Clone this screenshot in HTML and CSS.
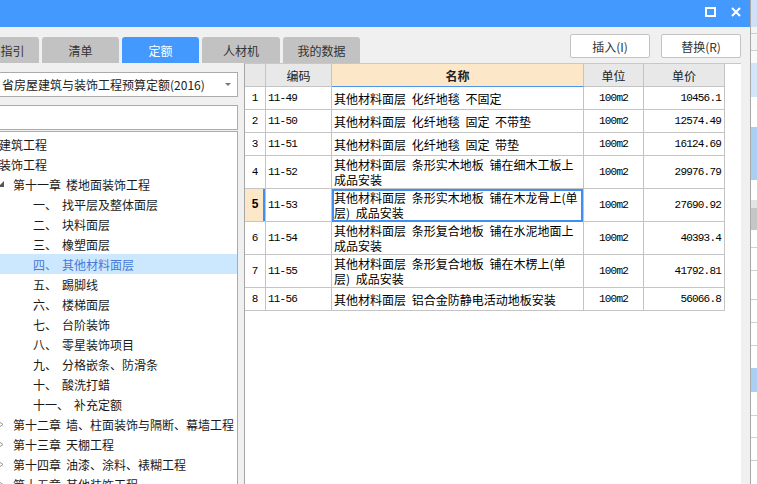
FILE: index.html
```html
<!DOCTYPE html>
<html lang="zh-CN">
<head>
<meta charset="utf-8">
<title>定额查询</title>
<link rel="stylesheet" href="styles.css">
</head>
<body>
<div class="screen">
  <div class="dialog">
    <div class="titlebar">
      <svg class="ico" width="11" height="10" viewBox="0 0 11 10"><rect x="1" y="1" width="9" height="8" fill="none" stroke="#fff" stroke-width="2"/></svg>
      <svg class="ico" width="10" height="10" viewBox="0 0 10 10"><path d="M1 1L9 9M9 1L1 9" stroke="#fff" stroke-width="2"/></svg>
    </div>
    <div class="toolbar">
      <div class="tabs">
        <div class="tab">清单指引</div>
        <div class="tab">清单</div>
        <div class="tab active">定额</div>
        <div class="tab wide">人材机</div>
        <div class="tab">我的数据</div>
      </div>
      <div class="actions">
        <button class="btn">插入(I)</button>
        <button class="btn">替换(R)</button>
      </div>
    </div>
    <div class="content">
      <div class="left">
        <div class="combo"><span class="combo-text">省房屋建筑与装饰工程预算定额(2016)</span><span class="caret"></span></div>
        <div class="search"></div>
        <div class="tree">
          <div class="node top">建筑工程</div>
          <div class="node top">装饰工程</div>
          <div class="node chapter"><span class="tw"><svg width="6" height="6" viewBox="0 0 6 6"><polygon points="6,0 6,6 0,6" fill="#555"/></svg></span><span>第十一章</span><span class="label">楼地面装饰工程</span></div>
          <div class="node sub"><span>一、</span><span class="label">找平层及整体面层</span></div>
          <div class="node sub"><span>二、</span><span class="label">块料面层</span></div>
          <div class="node sub"><span>三、</span><span class="label">橡塑面层</span></div>
          <div class="node sub sel"><span>四、</span><span class="label">其他材料面层</span></div>
          <div class="node sub"><span>五、</span><span class="label">踢脚线</span></div>
          <div class="node sub"><span>六、</span><span class="label">楼梯面层</span></div>
          <div class="node sub"><span>七、</span><span class="label">台阶装饰</span></div>
          <div class="node sub"><span>八、</span><span class="label">零星装饰项目</span></div>
          <div class="node sub"><span>九、</span><span class="label">分格嵌条、防滑条</span></div>
          <div class="node sub"><span>十、</span><span class="label">酸洗打蜡</span></div>
          <div class="node sub"><span>十一、</span><span class="label">补充定额</span></div>
          <div class="node chapter"><span class="tw"><svg width="6" height="7" viewBox="0 0 6 7"><polygon points="0,0 5,3.5 0,7" fill="none" stroke="#999" stroke-width="1"/></svg></span><span>第十二章</span><span class="label">墙、柱面装饰与隔断、幕墙工程</span></div>
          <div class="node chapter"><span class="tw"><svg width="6" height="7" viewBox="0 0 6 7"><polygon points="0,0 5,3.5 0,7" fill="none" stroke="#999" stroke-width="1"/></svg></span><span>第十三章</span><span class="label">天棚工程</span></div>
          <div class="node chapter"><span class="tw"><svg width="6" height="7" viewBox="0 0 6 7"><polygon points="0,0 5,3.5 0,7" fill="none" stroke="#999" stroke-width="1"/></svg></span><span>第十四章</span><span class="label">油漆、涂料、裱糊工程</span></div>
          <div class="node chapter"><span class="tw"><svg width="6" height="7" viewBox="0 0 6 7"><polygon points="0,0 5,3.5 0,7" fill="none" stroke="#999" stroke-width="1"/></svg></span><span>第十五章</span><span class="label">其他装饰工程</span></div>
        </div>
      </div>
      <div class="right">
        <div class="grid">
          <div class="c h"></div><div class="c h">编码</div><div class="c h name-h">名称</div><div class="c h">单位</div><div class="c h">单价</div>

          <div class="c rn">1</div><div class="c code">11-49</div><div class="c name">其他材料面层 化纤地毯 不固定</div><div class="c unit">100m2</div><div class="c price">10456.1</div>
          <div class="c rn">2</div><div class="c code">11-50</div><div class="c name">其他材料面层 化纤地毯 固定 不带垫</div><div class="c unit">100m2</div><div class="c price">12574.49</div>
          <div class="c rn">3</div><div class="c code">11-51</div><div class="c name">其他材料面层 化纤地毯 固定 带垫</div><div class="c unit">100m2</div><div class="c price">16124.69</div>
          <div class="c rn">4</div><div class="c code">11-52</div><div class="c name">其他材料面层 条形实木地板 铺在细木工板上<br>成品安装</div><div class="c unit">100m2</div><div class="c price">29976.79</div>
          <div class="c rn cur">5</div><div class="c code">11-53</div><div class="c name sel">其他材料面层 条形实木地板 铺在木龙骨上(单<br>层) 成品安装</div><div class="c unit">100m2</div><div class="c price">27690.92</div>
          <div class="c rn">6</div><div class="c code">11-54</div><div class="c name">其他材料面层 条形复合地板 铺在水泥地面上<br>成品安装</div><div class="c unit">100m2</div><div class="c price">40393.4</div>
          <div class="c rn">7</div><div class="c code">11-55</div><div class="c name">其他材料面层 条形复合地板 铺在木楞上(单<br>层) 成品安装</div><div class="c unit">100m2</div><div class="c price">41792.81</div>
          <div class="c rn">8</div><div class="c code">11-56</div><div class="c name">其他材料面层 铝合金防静电活动地板安装</div><div class="c unit">100m2</div><div class="c price">56066.8</div>
        </div>
      </div>
    </div>
  </div>
  <div class="app-strip"></div>
</div>
</body>
</html>
```

FILE: styles.css
```css
* { box-sizing: border-box; margin: 0; padding: 0; }

body {
  margin: 0;
  width: 757px;
  height: 484px;
  overflow: hidden;
  background: #fff;
  color: #1a1a1a;
  font-family: "Noto Sans CJK SC", "Noto Sans", "Liberation Sans", sans-serif;
  font-size: 12px;
}

.screen {
  display: flex;
  width: 757px;
  height: 484px;
  overflow: hidden;
}

.dialog {
  flex: none;
  width: 751px;
  height: 484px;
  background: #f0f0f0;
  border-right: 1px solid #a9a9a9;
  display: flex;
  flex-direction: column;
  overflow: hidden;
}

.titlebar {
  flex: none;
  height: 27px;
  background: #4499ff;
  display: flex;
  justify-content: flex-end;
  align-items: center;
  gap: 15px;
  padding: 0 9px 4px 0;
}

.ico { display: block; }

.toolbar {
  flex: none;
  height: 36px;
  display: flex;
}

.tabs {
  display: flex;
  align-items: flex-end;
  gap: 3px;
  margin-left: -38px;
}

.tab {
  width: 77px;
  height: 26px;
  background: #c2c2c2;
  border-radius: 3px 3px 0 0;
  color: #333;
  display: flex;
  align-items: center;
  justify-content: center;
  white-space: nowrap;
}

.tab.wide { width: 78px; }

.tab.active {
  background: #4499ff;
  color: #fff;
}

.actions {
  margin-left: auto;
  margin-right: 9px;
  margin-top: 7px;
  display: flex;
  gap: 11px;
  align-self: flex-start;
}

.btn {
  width: 80px;
  height: 24px;
  background: #fff;
  border: 1px solid #c3c3c3;
  border-radius: 2px;
  font-family: inherit;
  font-size: 12px;
  color: #333;
}

.content {
  flex: 1;
  min-height: 0;
  display: flex;
}

.left {
  flex: none;
  width: 238px;
  padding-top: 9px;
  display: flex;
  flex-direction: column;
}

.combo,
.search {
  margin-left: -1px;
  width: 239px;
  height: 25px;
  background: #fff;
  border: 1px solid #ababab;
  flex: none;
}

.combo {
  display: flex;
  align-items: center;
  padding-left: 2px;
}

.combo-text { white-space: nowrap; color: #222; }

.caret {
  margin-left: auto;
  margin-right: 6px;
  width: 0;
  height: 0;
  border-left: 3px solid transparent;
  border-right: 3px solid transparent;
  border-top: 3px solid #777;
}

.search { margin-top: 8px; }

.tree {
  flex: 1;
  margin-top: 1px;
  margin-left: -1px;
  width: 239px;
  background: #fff;
  border: 1px solid #ababab;
  border-bottom: none;
  padding-top: 2px;
  overflow: hidden;
}

.node {
  height: 20px;
  display: flex;
  align-items: center;
  white-space: nowrap;
}

.node.top { margin-left: -1px; }

.node.chapter { padding-left: 0; }

.tw {
  width: 13px;
  flex: none;
  display: flex;
  align-items: center;
}

.tw svg { margin-left: -2px; display: block; }

.node.sub { padding-left: 33px; }

.label { margin-left: 5px; }

.node.sel {
  background: #cce8ff;
  color: #4678d8;
}

.right {
  flex: none;
  width: 497px;
  margin-left: 6px;
  background: #fff;
  border-left: 1px solid #a6a6a6;
  border-top: 1px solid #c8c8c8;
}

.grid {
  display: grid;
  grid-template-columns: 21px 66px 252px 60px 81px;
  grid-template-rows: 23px 23px 23px 23px 33px 33px 33px 33px 23px;
  width: 480px;
}

.c {
  border-right: 1px solid #c4c4c4;
  border-bottom: 1px solid #c4c4c4;
  display: flex;
  align-items: center;
  padding: 0 3px;
  white-space: nowrap;
  overflow: hidden;
  color: #000;
}

.h {
  background: #e8e8e8;
  justify-content: center;
  color: #222;
}

.h.name-h {
  background: #fde7c9;
  font-weight: bold;
  border-bottom-color: #4a94ee;
}

.rn,
.code,
.unit,
.price {
  font-family: "Liberation Mono", "DejaVu Sans Mono", monospace;
  font-size: 11px;
  letter-spacing: -0.8px;
}

.rn { justify-content: center; padding: 0; letter-spacing: 0; }

.rn.cur {
  background: #fde7c9;
  font-weight: bold;
  font-size: 12px;
  box-shadow: inset -2px 0 0 #3f8ef3;
}

.code { padding-left: 2px; }

.name {
  padding-left: 2px;
  line-height: 15px;
  word-spacing: 3px;
}

.name.sel { position: relative; overflow: visible; }

.name.sel::after {
  content: "";
  position: absolute;
  left: 0;
  top: 0;
  right: 0;
  bottom: -1px;
  border: 2px solid #3f8ef3;
}

.unit { justify-content: center; }

.price { justify-content: flex-end; padding-right: 3px; }

.app-strip {
  flex: none;
  width: 6px;
  height: 484px;
  background: linear-gradient(to bottom,
    #cfe0f6 0 27px, #f4f4f4 27px 33px, #cfcfcf 33px 34px, #f4f4f4 34px 50px,
    #cfcfcf 50px 51px, #fafafa 51px 63px, #d3e5f9 63px 97px, #fff 97px 127px,
    #a9cff5 127px 180px, #fff 180px 200px, #e4e4e4 200px 208px, #c6c6c6 208px 230px,
    #fff 230px 247px, #d0d0d0 247px 248px, #fff 248px 270px, #d0d0d0 270px 271px,
    #fff 271px 299px, #d0d0d0 299px 300px, #fff 300px 322px, #d0d0d0 322px 323px,
    #fff 323px 345px, #d0d0d0 345px 346px, #fff 346px 368px, #a9cff5 368px 392px,
    #fff 392px 415px, #d0d0d0 415px 416px, #fff 416px 437px, #d0d0d0 437px 438px,
    #fff 438px 460px, #d0d0d0 460px 461px, #fff 461px);
}
```
